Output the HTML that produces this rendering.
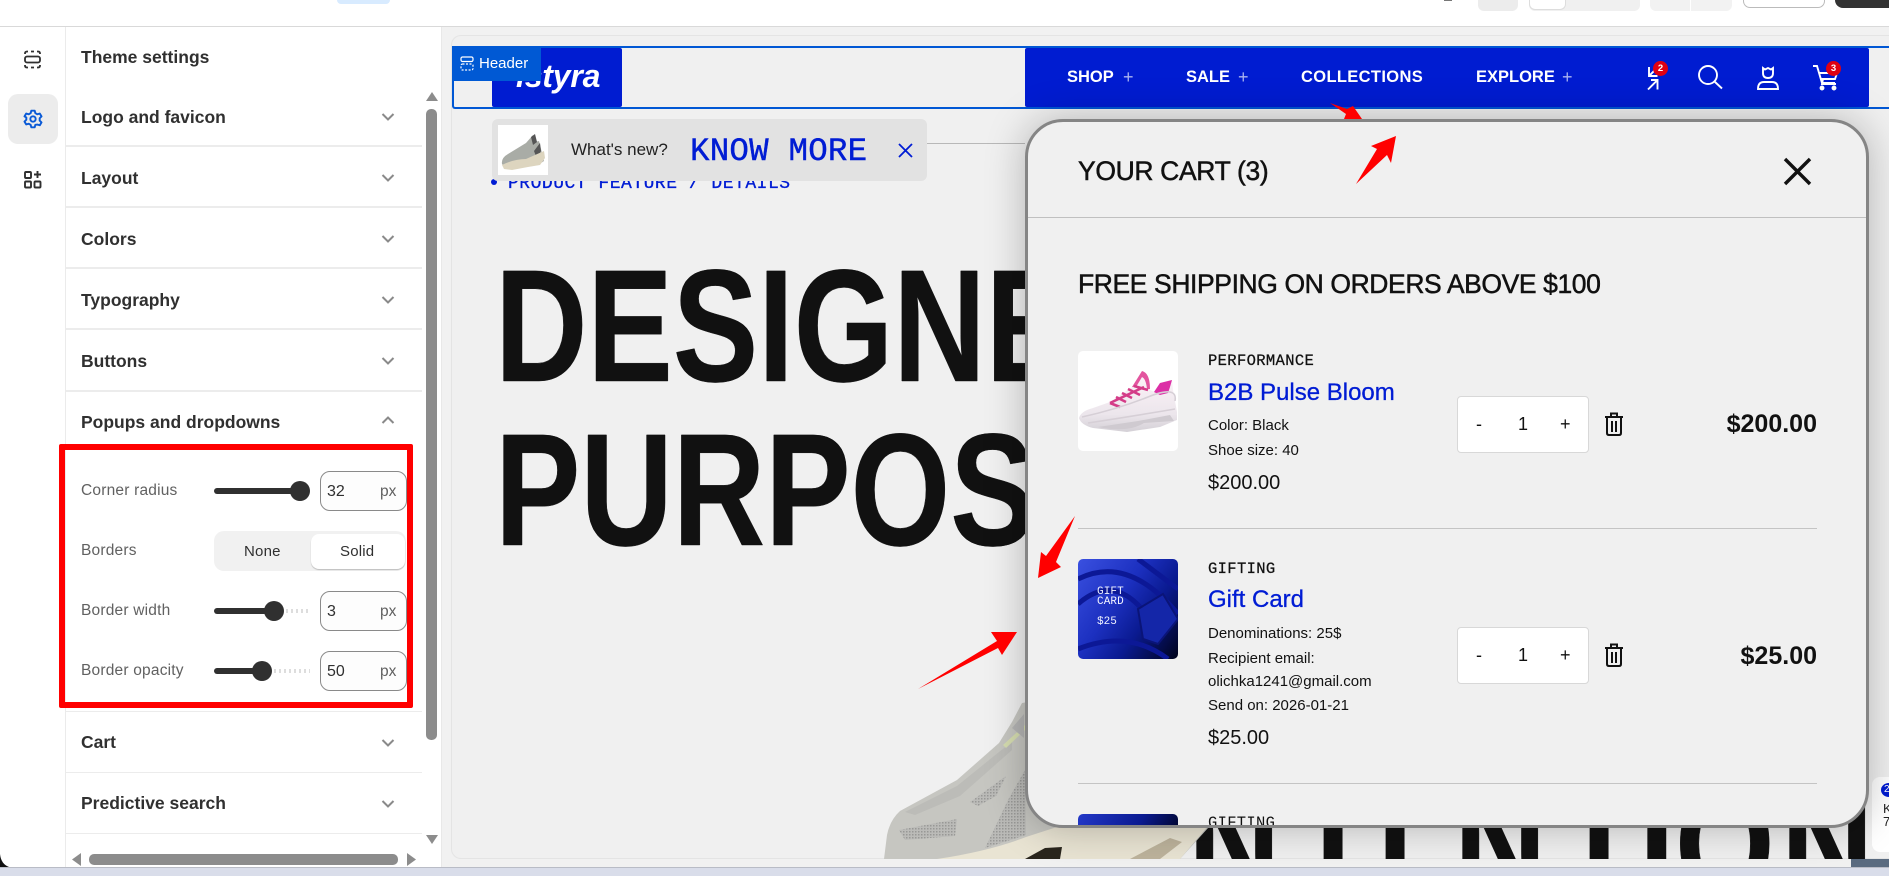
<!DOCTYPE html>
<html><head><meta charset="utf-8"><style>
html,body{margin:0;padding:0}
body{width:1889px;height:876px;overflow:hidden;position:relative;background:#f1f1f1;font-family:"Liberation Sans",sans-serif;color:#303030}
div,span.a,svg.a{position:absolute}
.t{position:absolute;white-space:nowrap;line-height:24px;height:24px}
.h{font-weight:bold;font-size:17.500px;color:#303030;left:81px}
.d{position:absolute;left:66px;width:356px;height:2px;background:#ececec}
.l{font-size:15.500px;color:#616161;left:81px;letter-spacing:.2px}
.inp{position:absolute;left:320px;width:85px;height:38px;border:1px solid #8a8a8a;border-radius:10px;background:#fdfdfd}
.m{font-family:"Liberation Mono",monospace}
.s{font-size:15px;color:#111;left:1208px}
.q{position:absolute;left:1457px;width:130px;height:55px;background:#fff;border:1px solid #d8d8d8;border-radius:4px}
.bar{position:absolute;left:214px;height:6px;background:#303030;border-radius:3px}
.th{position:absolute;width:20px;height:20px;border-radius:50%;background:#303030}
.big{position:absolute;white-space:nowrap;height:165px;line-height:165px;font-size:160px;font-weight:bold;color:#111;-webkit-text-stroke:.5px #111;transform:scaleX(.8);transform-origin:left top}
</style></head><body>

<!-- top bar -->
<div style="left:0;top:0;width:1889px;height:26px;background:#fff;border-bottom:1px solid #d9d9d9"></div>
<div style="left:337px;top:0;width:53px;height:4px;background:#d8ebff;border-radius:0 0 8px 8px"></div>
<div style="left:1478px;top:0;width:40px;height:11px;background:#ececec;border-radius:0 0 6px 6px"></div>
<div style="left:1529px;top:0;width:111px;height:11px;background:#f0f0f0;border-radius:0 0 6px 6px"></div>
<div style="left:1529px;top:0;width:35px;height:9px;background:#fff;border:1px solid #ddd;border-top:0;border-radius:0 0 6px 6px"></div>
<div style="left:1650px;top:0;width:40px;height:11px;background:#f2f2f2;border-radius:0 0 0 6px"></div>
<div style="left:1691px;top:0;width:41px;height:11px;background:#f2f2f2;border-radius:0 0 6px 0"></div>
<div style="left:1743px;top:0;width:80px;height:7px;background:#fff;border:1px solid #bbb;border-top:0;border-radius:0 0 7px 7px"></div>
<div style="left:1835px;top:0;width:54px;height:8px;background:#333;border-radius:0 0 0 8px"></div>
<div style="left:1444px;top:0;width:8px;height:1px;background:#777"></div>

<!-- sidebar -->
<div style="left:0;top:27px;width:441px;height:840px;background:#fff;border-right:1px solid #e8e8e8"></div>
<div style="left:65px;top:27px;width:1px;height:840px;background:#ebebeb"></div>
<svg class="a" style="left:0;top:853px" width="12" height="14"><path d="M0 1Q1 11 9 14H0Z" fill="#111"/></svg>

<svg class="a" style="left:23px;top:50px" width="19" height="19" fill="none" stroke="#303030" stroke-width="1.8"><rect x="2" y="6.5" width="15" height="6" rx="2"/><path d="M2 4V3.5Q2 1.5 4 1.5H5M8 1.5h3M14 1.5h1Q17 1.5 17 3.5V4M2 15v.5Q2 17.5 4 17.5H5M8 17.5h3M14 17.5h1Q17 17.5 17 15.5V15"/></svg>
<div style="left:8px;top:94px;width:50px;height:50px;background:#ececec;border-radius:10px"></div>
<svg class="a" style="left:23px;top:109px" width="20" height="20" viewBox="0 0 24 24" fill="none" stroke="#0a5ad6" stroke-width="2.3" stroke-linejoin="round"><circle cx="12" cy="12" r="3.2"/><path d="M10 2h4l.8 3 2.4 1.3 3-.8 2 3.4-2.2 2.2v2.8l2.2 2.2-2 3.4-3-.8L14.800 19l-.8 3h-4l-.8-3-2.400-1.300-3 .8-2-3.400 2.200-2.200v-2.800L1.800 8.900l2-3.400 3 .8L9.200 5z"/></svg>
<svg class="a" style="left:23px;top:170px" width="19" height="19" fill="none" stroke="#303030" stroke-width="1.9"><rect x="2" y="2" width="6" height="6" rx="1"/><rect x="2" y="11.500" width="6" height="6" rx="1"/><rect x="11.500" y="11.500" width="6" height="6" rx="1"/><path d="M14.500 1v7M11 4.500h7"/></svg>

<div class="t h" style="top:45px">Theme settings</div>
<div class="t h" style="top:105px">Logo and favicon</div>
<div class="d" style="top:145px"></div>
<div class="t h" style="top:166px">Layout</div>
<div class="d" style="top:206px"></div>
<div class="t h" style="top:227px">Colors</div>
<div class="d" style="top:267px"></div>
<div class="t h" style="top:288px">Typography</div>
<div class="d" style="top:328px"></div>
<div class="t h" style="top:349px">Buttons</div>
<div class="d" style="top:390px"></div>
<div class="t h" style="top:410px">Popups and dropdowns</div>
<div class="d" style="top:711px;height:1px"></div>
<div class="t h" style="top:730px">Cart</div>
<div class="d" style="top:772px;height:1px"></div>
<div class="t h" style="top:791px">Predictive search</div>
<div class="d" style="top:833px;height:1px"></div>

<svg class="a" style="left:378px;top:100px" width="20" height="720" fill="none" stroke="#8a8a8a" stroke-width="2"><path d="M4.500 14l5.500 5.500 5.500-5.500M4.500 75l5.500 5.500 5.500-5.500M4.500 136l5.500 5.500 5.500-5.500M4.500 197l5.500 5.500 5.500-5.500M4.500 258l5.500 5.500 5.500-5.500M4.500 323l5.500-5.500 5.500 5.500M4.500 640l5.500 5.500 5.500-5.500M4.500 701l5.500 5.500 5.500-5.500"/></svg>

<!-- scrollbars -->
<div style="left:426px;top:109px;width:11px;height:631px;background:#8c8c8c;border-radius:5px"></div>
<svg class="a" style="left:424px;top:90px" width="16" height="12"><path d="M2 11L8 2l6 9z" fill="#8c8c8c"/></svg>
<svg class="a" style="left:424px;top:834px" width="16" height="12"><path d="M2 1l6 9 6-9z" fill="#8c8c8c"/></svg>
<div style="left:89px;top:854px;width:309px;height:11px;background:#8c8c8c;border-radius:5px"></div>
<svg class="a" style="left:70px;top:852px" width="12" height="15"><path d="M11 1L2 7.500 11 14z" fill="#8c8c8c"/></svg>
<svg class="a" style="left:406px;top:852px" width="12" height="15"><path d="M1 1l9 6.500L1 14z" fill="#8c8c8c"/></svg>

<!-- red box controls -->
<div class="t l" style="top:479px">Corner radius</div>
<div class="t l" style="top:539px">Borders</div>
<div class="t l" style="top:599px">Border width</div>
<div class="t l" style="top:659px">Border opacity</div>
<div class="bar" style="top:488px;width:90px"></div><div class="th" style="left:290px;top:481px"></div>
<div class="bar" style="top:608px;width:62px"></div><div class="th" style="left:264px;top:601px"></div>
<div class="bar" style="top:668px;width:50px"></div><div class="th" style="left:252px;top:661px"></div>
<div style="left:286px;top:609px;width:24px;height:4px;background:repeating-linear-gradient(90deg,#ddd 0 2px,#fff 2px 5px)"></div>
<div style="left:274px;top:669px;width:36px;height:4px;background:repeating-linear-gradient(90deg,#ddd 0 2px,#fff 2px 5px)"></div>
<div class="inp" style="top:471px"></div><div class="inp" style="top:591px"></div><div class="inp" style="top:651px"></div>
<div class="t" style="left:327px;top:480px;font-size:16px;color:#303030">32</div>
<div class="t" style="left:380px;top:480px;font-size:15.500px;color:#616161">px</div>
<div class="t" style="left:327px;top:600px;font-size:16px;color:#303030">3</div>
<div class="t" style="left:380px;top:600px;font-size:15.500px;color:#616161">px</div>
<div class="t" style="left:327px;top:660px;font-size:16px;color:#303030">50</div>
<div class="t" style="left:380px;top:660px;font-size:15.500px;color:#616161">px</div>
<div style="left:214px;top:531px;width:192px;height:40px;background:#f1f1f1;border-radius:10px"></div>
<div style="left:311px;top:534px;width:94px;height:35px;background:#fff;border-radius:8px;box-shadow:0 1px 1px #bbb"></div>
<div class="t" style="left:244px;top:540px;font-size:15px;color:#303030;letter-spacing:.2px">None</div>
<div class="t" style="left:340px;top:540px;font-size:15px;color:#303030;letter-spacing:.2px">Solid</div>
<div style="left:59px;top:444px;width:342px;height:252px;border:6px solid #ff0000;border-radius:2px"></div>

<!-- preview card -->
<div style="left:451px;top:35px;width:1438px;height:824px;background:#f0f0f0;border:1px solid #e4e4e4;border-right:0;border-radius:10px 0 0 10px;box-sizing:border-box"></div>
<div style="left:1851px;top:859px;width:38px;height:8px;background:#5a6b80"></div>
<div style="left:0;top:867px;width:1889px;height:9px;background:#d9ddea;border-top:1px solid #b9bcc6;box-sizing:border-box"></div>

<!-- hero -->
<div style="left:492px;top:143px;width:533px;height:1px;background:#b8b8b8"></div>
<div style="left:491px;top:179px;width:6px;height:6px;background:#001cd4;border-radius:50%"></div>
<div class="t m" style="left:508px;top:172px;font-size:18px;letter-spacing:.5px;color:#001cd4;-webkit-text-stroke:.3px #001cd4">PRODUCT FEATURE / DETAILS</div>
<div class="big" style="left:495px;top:243px">DESIGNED</div>
<div class="big" style="left:495px;top:407px">PURPOSE</div>
<div style="left:1130px;top:800px;width:750px;height:59px;overflow:hidden">
<div class="big" style="left:58px;top:-39px;height:115px">N</div>
<div class="big" style="left:164px;top:-39px;height:115px">T</div>
<div class="big" style="left:226px;top:-39px;height:115px">T</div>
<div class="big" style="left:324px;top:-39px;height:115px">N</div>
<div class="big" style="left:430px;top:-39px;height:115px">T</div>
<div class="big" style="left:509px;top:-39px;height:115px">I</div>
<div class="big" style="left:545px;top:-39px;height:115px">O</div>
<div class="big" style="left:651px;top:-39px;height:115px">N</div>
</div>

<!-- big shoe -->
<svg class="a" style="left:860px;top:690px" width="360" height="169" viewBox="860 690 360 169">
<defs><pattern id="mesh" width="3" height="3" patternUnits="userSpaceOnUse"><rect width="3" height="3" fill="#bbbbb8"/><rect width="1.500" height="1.500" fill="#989896"/></pattern></defs>
<path d="M884 859L887 835Q890 820 900 811L957 780L999 743L1012 722L1022 703L1040 700L1120 800L1208 828L1180 859Z" fill="#c6c6c1"/>
<path d="M899 830L957 819 955 836 905 840Z" fill="url(#mesh)"/>
<path d="M970 802L1006 776 996 796 978 806Z" fill="url(#mesh)"/>
<path d="M985 848L1008 800 1025 770 1026 835Z" fill="url(#mesh)"/>
<path d="M905 812L957 786 999 752 1012 742 1012 750 960 796 915 815Z" fill="#bcbcb8"/>
<path d="M1003 745L1025 725V730L1006 748Z" fill="#d6ddb0"/>
<path d="M1012 728L1024 714V738Z" fill="#b4b4b4"/>
<path d="M937 859Q990 851 1026 837L1060 826H1208L1180 859Z" fill="#e9e4d3"/>
<path d="M1025 859L1045 848L1062 847L1060 859Z" fill="#2a261d"/>
<path d="M1130 859L1170 838L1182 842L1160 859Z" fill="#bdb39c"/>
</svg>

<!-- header -->
<div style="left:492px;top:48px;width:130px;height:59px;background:#001cd1;border-radius:2px"></div>
<div class="t" style="left:516px;top:60px;height:32px;line-height:32px;font-size:32px;font-style:italic;font-weight:bold;color:#fff;letter-spacing:-.2px">istyra</div>
<div style="left:1025px;top:48px;width:844px;height:59px;background:#001cd1;border-radius:2px"></div>
<div style="left:452px;top:46px;width:1437px;height:63px;border:2px solid #0057d4;border-right:0;border-radius:3px 0 0 3px;box-sizing:border-box"></div>
<div style="left:452px;top:46px;width:89px;height:35px;background:#0059d4"></div>
<svg class="a" style="left:460px;top:56px" width="14" height="15" fill="none" stroke="#fff" stroke-width="1.200"><rect x="1" y="1" width="12" height="4.500" rx="1.500"/><rect x="1" y="8" width="12" height="6" rx="1.500" stroke-dasharray="2 1.500"/></svg>
<div class="t" style="left:479px;top:52px;font-size:15px;color:#fff">Header</div>

<div class="t" style="left:1067px;top:65px;font-size:16.500px;font-weight:bold;color:#fff">SHOP</div>
<div class="t" style="left:1123px;top:65px;font-size:18px;color:#aab4f0">+</div>
<div class="t" style="left:1186px;top:65px;font-size:16.500px;font-weight:bold;color:#fff">SALE</div>
<div class="t" style="left:1238px;top:65px;font-size:18px;color:#aab4f0">+</div>
<div class="t" style="left:1301px;top:65px;font-size:16.500px;font-weight:bold;color:#fff;letter-spacing:.35px">COLLECTIONS</div>
<div class="t" style="left:1476px;top:65px;font-size:16.500px;font-weight:bold;color:#fff">EXPLORE</div>
<div class="t" style="left:1562px;top:65px;font-size:18px;color:#aab4f0">+</div>

<svg class="a" style="left:1640px;top:60px" width="210" height="36" fill="none" stroke="#fff" stroke-width="1.900">
<path d="M9 7v9h8.500M9 16l8.500-8.500M11 20h6.500v9.500M17.500 20L8 29.500"/>
<circle cx="68" cy="15" r="9"/><path d="M74.500 21.500l7.500 7"/>
<path d="M123 8l2 1.500 3-1.500 3 1.500 2-1.500v5q0 5-5 5t-5-5zM118 29q0-7 6-7h8q6 0 6 7z"/>
<path d="M173 6h4l5 17h13M179 13h18l-2 6h-14M183 19l-1 5h14"/>
<circle cx="182" cy="28" r="1.500" fill="#fff"/><circle cx="194" cy="28" r="1.500" fill="#fff"/>
</svg>
<div style="left:1653px;top:61px;width:15px;height:15px;background:#e00012;border-radius:50%;color:#fff;font-size:9.500px;font-weight:bold;line-height:15px;text-align:center">2</div>
<div style="left:1826px;top:61px;width:15px;height:15px;background:#e00012;border-radius:50%;color:#fff;font-size:9.500px;font-weight:bold;line-height:15px;text-align:center">3</div>

<!-- right widget -->
<div style="left:1872px;top:777px;width:17px;height:75px;background:#fff;border-radius:8px 0 0 8px;overflow:hidden">
<div style="left:9px;top:6px;width:16px;height:14px;background:#001cd1;border-radius:50%;color:#fff;font-size:10px;line-height:14px;padding-left:3px;box-sizing:border-box">2</div>
<div class="t" style="left:11px;top:25px;font-size:13px;line-height:13px;height:26px;color:#222">K<br>7</div>
</div>

<!-- cart popup -->
<div style="left:1025px;top:119px;width:844px;height:709px;box-sizing:border-box;background:#f0f0f0;border:3px solid #858585;border-radius:38px;box-shadow:0 0 40px rgba(0,0,0,.25);overflow:hidden">
<div style="left:0;top:95px;width:838px;height:1px;background:#c0c0c0"></div>
<div style="left:50px;top:692px;width:100px;height:20px;background:linear-gradient(120deg,#2338c8,#0a1a90 60%,#00052a);border-radius:5px 5px 0 0"></div>
<div class="t m" style="left:180px;top:689px;font-size:15.500px;color:#111;letter-spacing:.3px">GIFTING</div>
</div>
<div class="t" style="left:1078px;top:157px;height:28px;line-height:28px;font-size:26.500px;color:#111;letter-spacing:-.35px;-webkit-text-stroke:.5px #111">YOUR CART (3)</div>
<svg class="a" style="left:1782px;top:156px" width="31" height="31" stroke="#111" stroke-width="3.400" fill="none"><path d="M3 3l25 25M28 3L3 28"/></svg>
<div class="t" style="left:1078px;top:270px;height:28px;line-height:28px;font-size:26.500px;color:#111;letter-spacing:-.4px;-webkit-text-stroke:.5px #111">FREE SHIPPING ON ORDERS ABOVE $100</div>

<!-- item 1 -->
<div style="left:1078px;top:351px;width:100px;height:100px;background:#fff;border-radius:5px"></div>
<svg class="a" style="left:1078px;top:351px" width="100" height="100">
<defs><linearGradient id="ps" x1="0" y1="0" x2="0" y2="1"><stop offset="0" stop-color="#fdf3f8"/><stop offset=".7" stop-color="#ece6ec"/><stop offset="1" stop-color="#d4d0d6"/></linearGradient></defs>
<path d="M1 67Q3 60 15 57L32 51 54 36 64 22 70 29 72 39 77 41 82 32 94 29 95 39 99 61V69L82 76 49 81 15 77Q3 74 1 67Z" fill="url(#ps)"/>
<path d="M54 36L64 20Q72 22 72 38L69 38Q68 28 64 26L58 36Z" fill="#e3559f"/>
<path d="M76 41L82 32 94 29 92 36 90 42 82 44Z" fill="#dc2fa6"/>
<path d="M32 52l10 4M38 46l10 5M44 42l10 5M50 38l12 6M56 35l14 4M32 52L66 36" stroke="#d43c88" stroke-width="2.600" fill="none"/>
<path d="M4 66Q40 58 70 46T97 50M10 72Q50 66 97 58" stroke="#d6cfd6" stroke-width="1.600" fill="none"/>
<path d="M20 76Q50 82 66 72L96 70 92 64 60 70Z" fill="#cfcad0"/>
</svg>
<div class="t m" style="left:1208px;top:349px;font-size:15.500px;color:#111;letter-spacing:.35px;-webkit-text-stroke:.25px #111">PERFORMANCE</div>
<div class="t" style="left:1208px;top:381px;font-size:24px;color:#001cd4;-webkit-text-stroke:.3px #001cd4">B2B Pulse Bloom</div>
<div class="t s" style="top:414px">Color: Black</div>
<div class="t s" style="top:439px">Shoe size: 40</div>
<div class="t" style="left:1208px;top:471px;font-size:20px;color:#111">$200.00</div>
<div class="q" style="top:396px"></div>
<div class="t" style="left:1476px;top:412px;font-size:18px;color:#111">-</div>
<div class="t" style="left:1518px;top:412px;font-size:18px;color:#111">1</div>
<div class="t" style="left:1560px;top:412px;font-size:18px;color:#111">+</div>
<svg class="a" style="left:1604px;top:412px" width="20" height="25" fill="none" stroke="#111" stroke-width="2"><path d="M1 5h18M7 4V1.500h6V4M3 6v15q0 2 2 2h10q2 0 2-2V6M8 9v11M12 9v11"/></svg>
<div class="t" style="right:72px;top:412px;font-size:25px;font-weight:bold;color:#111">$200.00</div>
<div style="left:1078px;top:528px;width:739px;height:1px;background:#c4c4c4"></div>

<!-- item 2 -->
<div style="left:1078px;top:559px;width:100px;height:100px;border-radius:5px;overflow:hidden;background:linear-gradient(125deg,#3a50e0 0%,#1c30c0 40%,#0a1a90 65%,#00031a 100%)">
<svg class="a" width="100" height="100" fill="none" stroke="#0c1896" stroke-width="5"><path d="M0 20Q50 -5 100 55M0 45Q40 10 75 65M0 90Q50 70 90 100M60 0L100 30"/><path d="M60 50L85 35 100 60 80 85 65 80Z" fill="#1426a8" stroke="#0a1478" stroke-width="2"/></svg>
<div class="t m" style="left:19px;top:28px;font-size:11px;line-height:10px;height:20px;color:#f0f2ff;white-space:pre;letter-spacing:.1px">GIFT
CARD</div>
<div class="t m" style="left:19px;top:56px;font-size:11px;line-height:14px;height:14px;color:#f0f2ff">$25</div>
</div>
<div class="t m" style="left:1208px;top:557px;font-size:15.500px;color:#111;letter-spacing:.35px;-webkit-text-stroke:.25px #111">GIFTING</div>
<div class="t" style="left:1208px;top:588px;font-size:24px;color:#001cd4;-webkit-text-stroke:.3px #001cd4">Gift Card</div>
<div class="t s" style="top:622px">Denominations: 25$</div>
<div class="t s" style="top:647px">Recipient email:</div>
<div class="t s" style="top:670px">olichka1241@gmail.com</div>
<div class="t s" style="top:694px">Send on: 2026-01-21</div>
<div class="t" style="left:1208px;top:726px;font-size:20px;color:#111">$25.00</div>
<div class="q" style="top:627px"></div>
<div class="t" style="left:1476px;top:643px;font-size:18px;color:#111">-</div>
<div class="t" style="left:1518px;top:643px;font-size:18px;color:#111">1</div>
<div class="t" style="left:1560px;top:643px;font-size:18px;color:#111">+</div>
<svg class="a" style="left:1604px;top:643px" width="20" height="25" fill="none" stroke="#111" stroke-width="2"><path d="M1 5h18M7 4V1.500h6V4M3 6v15q0 2 2 2h10q2 0 2-2V6M8 9v11M12 9v11"/></svg>
<div class="t" style="right:72px;top:644px;font-size:25px;font-weight:bold;color:#111">$25.00</div>
<div style="left:1078px;top:783px;width:739px;height:1px;background:#c4c4c4"></div>

<!-- what's new -->
<div style="left:492px;top:119px;width:435px;height:62px;background:#e2e2e2;border-radius:6px"></div>
<div style="left:498px;top:125px;width:50px;height:50px;background:#fff"></div>
<svg class="a" style="left:498px;top:125px" width="50" height="50">
<path d="M4 39Q3 33 10 29L28 18 35 10 37 17 41 16 44 28 46 36 40 40 22 42 8 44Z" fill="#a9aca6"/>
<path d="M33 12l4-3 2 8-4 3zM36 26l6-8 1 8-4 8z" fill="#555"/>
<path d="M4 40Q16 34 28 34L46 26 47 33 42 40 30 42 14 45 6 44Z" fill="#ddd5bf"/>
</svg>
<div class="t" style="left:571px;top:138px;font-size:17px;color:#222">What's new?</div>
<div class="t m" style="left:690px;top:134px;height:36px;line-height:36px;font-size:32.500px;color:#001cd4;letter-spacing:.2px;-webkit-text-stroke:.4px #001cd4">KNOW MORE</div>
<svg class="a" style="left:897px;top:142px" width="17" height="17" stroke="#001cd4" stroke-width="1.800" fill="none"><path d="M2 2l13 13M15 2L2 15"/></svg>

<!-- annotation arrows -->
<svg class="a" style="left:0;top:0" width="1889" height="876" fill="#ff0000">
<path d="M1330 103L1347 109 1353 106 1362 119H1344L1346 114Z"/>
<path d="M1356 184L1377 149 1371 146 1396 136 1391 163 1387 155Z"/>
<path d="M1075 516L1056 562 1061 567 1038 578 1041 552 1046 556Z"/>
<path d="M918 689L997 641 991 632H1017L1002 655 998 648Z"/>
</svg>
</body></html>
